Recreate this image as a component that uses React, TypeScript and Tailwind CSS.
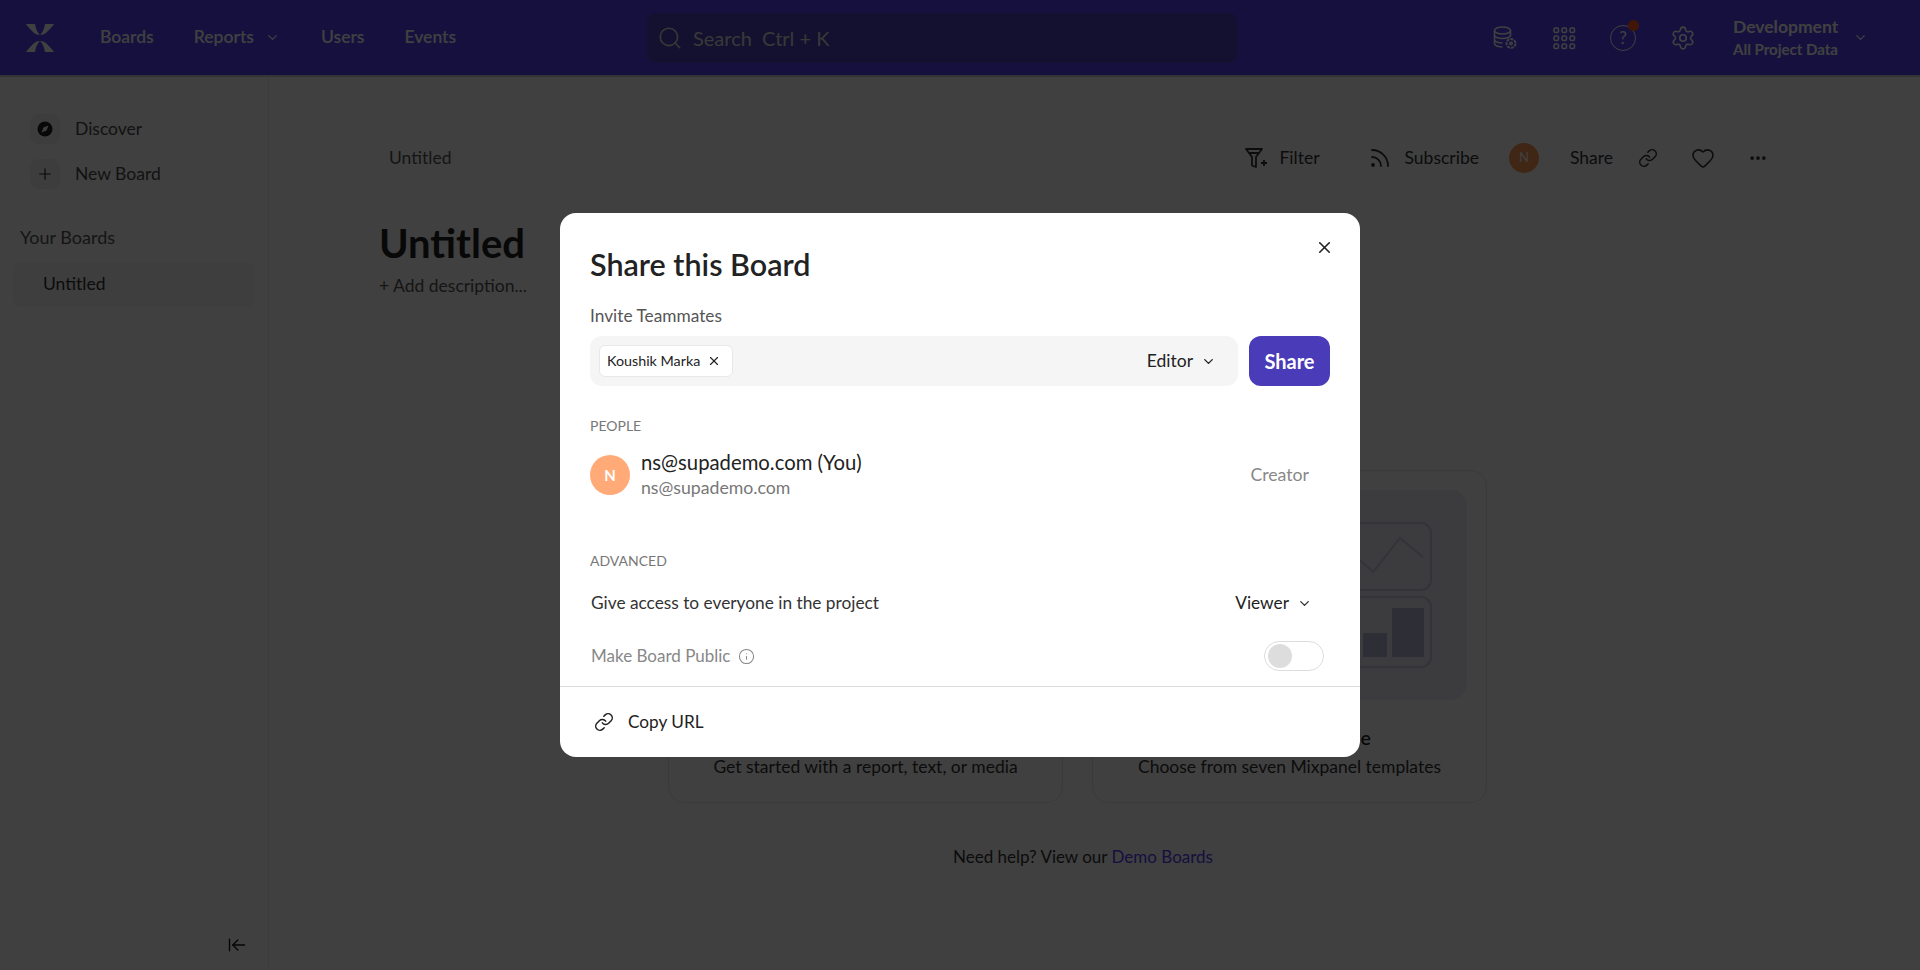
import { ArrowLeftToLine, ChevronDown, Ellipsis, Heart, Info, Link, Plus, Rss, Search, Settings, X } from "lucide-react";

const font = { fontFamily: "Lato, 'Noto Sans', sans-serif" };

function Logo() {
  return (
    <svg width="30" height="30" viewBox="0 0 30 30" fill="currentColor">
      <path d="M1 1h9c1 6 3 9 5 11-3 0-5-1-7-3C6 7 3 4 1 1zM29 1h-9c-1 6-3 9-5 11 3 0 5-1 7-3 2-2 5-5 7-8zM1 29h9c1-6 3-9 5-11-3 0-5 1-7 3-2 2-5 5-7 8zM29 29h-9c-1-6-3-9-5-11 3 0 5 1 7 3 2 2 5 5 7 8z" />
    </svg>
  );
}

function DatabaseGear() {
  return (
    <svg width="26" height="26" viewBox="0 0 26 26" fill="none" stroke="currentColor" strokeWidth="1.6">
      <ellipse cx="10.5" cy="5.5" rx="8" ry="3.5" />
      <path d="M2.5 5.5v13c0 2 3.5 3.5 8 3.5M18.500 5.500v6M2.500 10c0 2 3.500 3.500 8 3.500s8-1.500 8-3.500M2.500 14.500c0 2 3.500 3.500 8 3.500" />
      <circle cx="19" cy="18.500" r="4.500" strokeDasharray="3 1" strokeWidth="2" />
      <circle cx="19" cy="18.500" r="1.200" />
    </svg>
  );
}

function Dots() {
  const cells = [2, 10, 18];
  return (
    <svg width="24" height="24" viewBox="0 0 24 24" fill="none" stroke="currentColor" strokeWidth="1.600">
      {cells.map((y) => cells.map((x) => <rect key={`${x}-${y}`} x={x} y={y} width="4.500" height="4.500" rx="1.500" />))}
    </svg>
  );
}

function FilterPlus() {
  return (
    <svg width="24" height="24" viewBox="0 0 24 24" fill="none" stroke="currentColor" strokeWidth="1.800" strokeLinejoin="round">
      <path d="M2 3h16l-6 8v10l-4-1.500V11z" />
      <path d="M5 7h10M17 17h6M20 14v6" />
    </svg>
  );
}

function Compass() {
  return (
    <svg width="16" height="16" viewBox="0 0 16 16">
      <circle cx="8" cy="8" r="7.500" fill="currentColor" />
      <path d="M11.500 4.500 9.500 9.500 4.500 11.500 6.500 6.500z" fill="#f7f7f7" />
    </svg>
  );
}

function HelpBadge() {
  return (
    <div className="relative flex h-[26px] w-[26px] items-center justify-center rounded-full border-[1.5px] border-white text-[17px]">
      ?
      <span className="absolute -right-[4px] -top-[6px] h-[11px] w-[11px] rounded-full bg-[#ff5a1f]" />
    </div>
  );
}

function SideItem({ icon, label }: { icon: React.ReactNode; label: string }) {
  return (
    <div className="flex h-[30px] items-center gap-[15px] pl-[30px] text-[17.5px] text-[#4a4a4a]">
      <span className="flex h-[30px] w-[30px] items-center justify-center rounded-lg bg-[#f4f4f4] text-[#222]">{icon}</span>
      {label}
    </div>
  );
}

export default function App() {
  return (
    <div className="relative flex h-[970px] flex-col overflow-hidden bg-white" style={font}>
      <header className="flex h-[77px] shrink-0 items-center border-b-2 border-[#cfcfdc] bg-[#5540f8] text-white">
        <div className="ml-[25px] w-[30px]"><Logo /></div>
        <nav className="ml-[45px] flex w-[547px] items-center text-[17.5px] font-semibold">
          <span>Boards</span>
          <span className="ml-[40px]">Reports</span>
          <ChevronDown className="ml-[11px]" size={15} />
          <span className="ml-[41px]">Users</span>
          <span className="ml-[40px]">Events</span>
        </nav>
        <div className="flex h-[50px] w-[590px] items-center rounded-lg bg-[#4c44bc] pl-[10px] text-[20px] text-[#ddd]">
          <Search size={26} strokeWidth={1.500} />
          <span className="ml-[10px] whitespace-pre">Search  Ctrl + K</span>
        </div>
        <div className="ml-[255px] flex items-center gap-[34px]">
          <DatabaseGear />
          <Dots />
          <HelpBadge />
          <Settings size={26} strokeWidth={1.500} />
        </div>
        <div className="ml-[37px] leading-[22px]">
          <div className="text-[17.5px] font-bold">Development</div>
          <div className="text-[15px] font-bold">All Project Data</div>
        </div>
        <ChevronDown className="ml-[15px]" size={15} />
      </header>

      <div className="flex flex-1">
        <aside className="flex w-[269px] shrink-0 flex-col border-r border-[#eee] pt-[37px]">
          <SideItem icon={<Compass />} label="Discover" />
          <div className="mt-[15px]">
            <SideItem icon={<Plus size={18} strokeWidth={1.500} />} label="New Board" />
          </div>
          <div className="mt-[35px] pl-[20px] text-[18px] text-[#555]">Your Boards</div>
          <div className="mx-[13px] mt-[11px] flex h-[45px] items-center rounded-lg bg-[#f5f5f5] pl-[30px] text-[17.5px] text-[#333]">Untitled</div>
          <div className="mt-auto flex justify-end pb-[15px] pr-[21px] text-[#111]">
            <ArrowLeftToLine size={20} strokeWidth={1.600} />
          </div>
        </aside>

        <main className="flex-1 pl-[110px] pt-[66px]">
          <div className="flex h-[30px] items-center pl-[10px] pr-[152px] text-[17.5px] text-[#555]">
            <span>Untitled</span>
            <div className="ml-auto flex items-center text-[#333]">
              <FilterPlus />
              <span className="ml-[11px]">Filter</span>
              <Rss className="ml-[48px]" size={24} strokeWidth={1.800} />
              <span className="ml-[13px]">Subscribe</span>
              <span className="ml-[30px] flex h-[30px] w-[30px] items-center justify-center rounded-full bg-[#ff9a55] text-[13px] text-white">N</span>
              <span className="ml-[31px]">Share</span>
              <Link className="ml-[25px]" size={20} strokeWidth={1.800} />
              <Heart className="ml-[33px]" size={24} strokeWidth={1.600} />
              <Ellipsis className="ml-[33px]" size={20} strokeWidth={2.500} />
            </div>
          </div>
          <h1 className="mt-[48px] text-[40px] font-bold leading-[44px] text-[#222]">Untitled</h1>
          <div className="mt-[9px] text-[17.500px] leading-[24px] text-[#555]">+ Add description...</div>

          <div className="ml-[289px] mt-[172px] grid w-[819px] grid-cols-2 gap-[29px]">
            <div className="flex h-[333px] flex-col items-center rounded-2xl border border-[#e8e8e8] p-[19px]">
              <div className="h-[210px] w-full rounded-2xl bg-[#f3f3fa]" />
              <div className="mt-[25px] text-[21px] font-semibold leading-[26px] text-[#222]">Blank Board</div>
              <div className="mt-[4px] text-[17.500px] leading-[24px] text-[#333]">Get started with a report, text, or media</div>
            </div>
            <div className="flex h-[333px] flex-col items-center rounded-2xl border border-[#e8e8e8] p-[19px]">
              <div className="flex h-[210px] w-full justify-end rounded-2xl bg-[#eeeef9] pr-[35px] pt-[32px]">
                <svg className="shrink-0 self-start" width="320" height="146" viewBox="35 0 320 146" fill="none" stroke="#ccccde" strokeWidth="2">
                  <rect x="36" y="1" width="318" height="67" rx="10" />
                  <rect x="36" y="75" width="318" height="70" rx="10" />
                  <path d="M250 38h33l13 12 27-34 23 19" />
                  <rect x="286" y="111" width="24" height="24" fill="#b9b9dc" stroke="none" />
                  <rect x="315" y="86" width="32" height="49" fill="#b9b9dc" stroke="none" />
                </svg>
              </div>
              <div className="mt-[25px] text-[19.5px] font-semibold leading-[26px] text-[#222]">Choose a Template</div>
              <div className="mt-[4px] text-[17.500px] leading-[24px] text-[#333]">Choose from seven Mixpanel templates</div>
            </div>
          </div>
          <div className="ml-[289px] mt-[42px] w-[830px] text-center text-[17px] leading-[24px] text-[#333]">
            Need help? View our <span className="text-[#5540f8]">Demo Boards</span>
          </div>
        </main>
      </div>

      <div className="absolute inset-0 flex items-center justify-center bg-black/75">
        <div className="relative flex h-[544px] w-[800px] flex-col rounded-2xl bg-white pt-[33px] text-[#222]">
          <X className="absolute right-[26px] top-[25px]" size={19} strokeWidth={2} />
          <div className="px-[30px]">
            <h2 className="text-[30.5px] font-semibold leading-[36px]">Share this Board</h2>
            <div className="mt-[23px] text-[17.3px] leading-[22px] text-[#555]">Invite Teammates</div>
            <div className="mt-[9px] flex gap-[11px]">
              <div className="flex h-[50px] flex-1 items-center rounded-xl bg-[#f5f5f5] pl-[9px] pr-[22px]">
                <div className="flex h-[32px] w-[134px] items-center justify-between rounded-md border border-[#e8e8e8] bg-white pl-[7px] pr-[11px] text-[14.300px]">
                  Koushik Marka
                  <X size={14} strokeWidth={2} />
                </div>
                <span className="ml-auto text-[17.500px]">Editor</span>
                <ChevronDown className="ml-[8px]" size={15} strokeWidth={2.200} />
              </div>
              <button className="h-[50px] w-[81px] rounded-xl bg-[#4a3bb8] text-[20px] font-bold text-white">Share</button>
            </div>

            <div className="mt-[30px] text-[14px] leading-[20px] text-[#777]">PEOPLE</div>
            <div className="mt-[19px] flex h-[40px] items-center">
              <span className="flex h-[40px] w-[40px] items-center justify-center rounded-full bg-[#ffaa77] text-[15px] font-bold text-white">N</span>
              <div className="ml-[11px]">
                <div className="text-[20.300px] leading-[25px]">ns@supademo.com (You)</div>
                <div className="text-[17.700px] leading-[25px] text-[#777]">ns@supademo.com</div>
              </div>
              <span className="ml-auto mr-[21px] text-[17.700px] text-[#888]">Creator</span>
            </div>

            <div className="mt-[56px] text-[14px] leading-[20px] text-[#777]">ADVANCED</div>
            <div className="mt-[20px] flex h-[24px] items-center pl-[1px] text-[17.300px] text-[#333]">
              Give access to everyone in the project
              <span className="ml-auto text-[#222]">Viewer</span>
              <ChevronDown className="ml-[8px] mr-[18px]" size={15} strokeWidth={2.200} />
            </div>
            <div className="mt-[26px] flex h-[30px] items-center pl-[1px] text-[17px] text-[#888]">
              Make Board Public
              <Info className="ml-[8px]" size={17} strokeWidth={1.500} />
              <div className="ml-auto mr-[6px] flex h-[30px] w-[60px] items-center rounded-full border border-[#ddd] pl-[3px]">
                <span className="h-[24px] w-[24px] rounded-full bg-[#ddd]" />
              </div>
            </div>
          </div>
          <div className="mt-[15px] flex flex-1 items-center gap-[14px] border-t border-[#ddd] pl-[34px] text-[17.200px]">
            <Link size={20} strokeWidth={1.800} />
            Copy URL
          </div>
        </div>
      </div>
    </div>
  );
}
